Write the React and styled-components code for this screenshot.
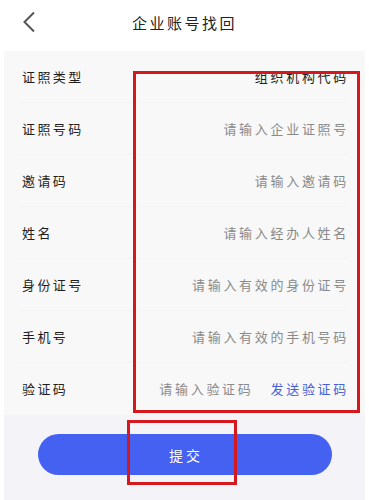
import React from "react"
import styled, { createGlobalStyle } from "styled-components"

const GlobalStyle = createGlobalStyle`
  html, body {
    margin: 0;
    padding: 0;
    background: #ffffff;
    font-family: "Noto Sans CJK SC", "Noto Sans", sans-serif;
  }
`

const Page = styled.div`
  position: relative;
  width: 369px;
  height: 500px;
  overflow: hidden;
  background: #ffffff;
`

const Header = styled.div`
  position: relative;
  height: 51px;
  display: flex;
  align-items: center;
  justify-content: center;
`

const BackButton = styled.div`
  position: absolute;
  left: 22px;
  top: 10px;
  width: 18px;
  height: 24px;
  display: flex;
  align-items: center;
`

const Title = styled.h1`
  margin: 0 0 6px 0;
  font-size: 15px;
  font-weight: 400;
  letter-spacing: 2.5px;
  color: #222;
`

const Panel = styled.div`
  margin: 0 4px;
  background: #f8f8f8;
`

const Row = styled.div`
  height: 52px;
  margin: 0 18px;
  display: flex;
  align-items: center;
  justify-content: space-between;
  border-bottom: 1px solid ${(p) => (p.$last ? "transparent" : "#f3f3f3")};
  box-sizing: border-box;
`

const Label = styled.span`
  font-size: 13px;
  letter-spacing: 2.4px;
  color: #1e1e1e;
`

const Value = styled.span`
  font-size: 13px;
  letter-spacing: 2.7px;
  color: ${(p) => (p.$filled ? "#1e1e1e" : "#8a8a8a")};
  margin-right: -2px;
`

const CodeGroup = styled.div`
  display: flex;
  align-items: center;
  gap: 19px;
`

const SendCode = styled.span`
  font-size: 13px;
  letter-spacing: 2.7px;
  color: #4a5fd6;
  margin-right: -2px;
`

const Footer = styled.div`
  margin: 0 4px;
  height: 85px;
  background: #f3f3f8;
  display: flex;
  justify-content: center;
  padding-top: 19px;
  box-sizing: border-box;
`

const SubmitButton = styled.button`
  width: 294px;
  height: 41px;
  border: none;
  border-radius: 21px;
  background: #4461f2;
  color: #ffffff;
  font-family: "Noto Sans CJK SC", sans-serif;
  font-size: 14px;
  letter-spacing: 3px;
  padding: 0 0 0 3px;
`

const Marker = styled.div`
  position: absolute;
  border: 3px solid #d4181e;
  box-sizing: border-box;
  pointer-events: none;
`

const fields = [
  { label: "证照类型", value: "组织机构代码", filled: true },
  { label: "证照号码", value: "请输入企业证照号" },
  { label: "邀请码", value: "请输入邀请码" },
  { label: "姓名", value: "请输入经办人姓名" },
  { label: "身份证号", value: "请输入有效的身份证号" },
  { label: "手机号", value: "请输入有效的手机号码" },
]

export default function App() {
  return (
    <Page>
      <GlobalStyle />
      <Header>
        <BackButton>
          <svg width="14" height="22" viewBox="0 0 14 22">
            <path d="M12 1.5 L2.5 11 L12 20.5" fill="none" stroke="#555" strokeWidth="2" />
          </svg>
        </BackButton>
        <Title>企业账号找回</Title>
      </Header>
      <Panel>
        {fields.map((f) => (
          <Row key={f.label}>
            <Label>{f.label}</Label>
            <Value $filled={f.filled}>{f.value}</Value>
          </Row>
        ))}
        <Row $last>
          <Label>验证码</Label>
          <CodeGroup>
            <Value>请输入验证码</Value>
            <SendCode>发送验证码</SendCode>
          </CodeGroup>
        </Row>
      </Panel>
      <Footer>
        <SubmitButton>提交</SubmitButton>
      </Footer>
      <Marker style={{ left: 133, top: 71, width: 227, height: 342 }} />
      <Marker style={{ left: 127, top: 420, width: 110, height: 65 }} />
    </Page>
  )
}
